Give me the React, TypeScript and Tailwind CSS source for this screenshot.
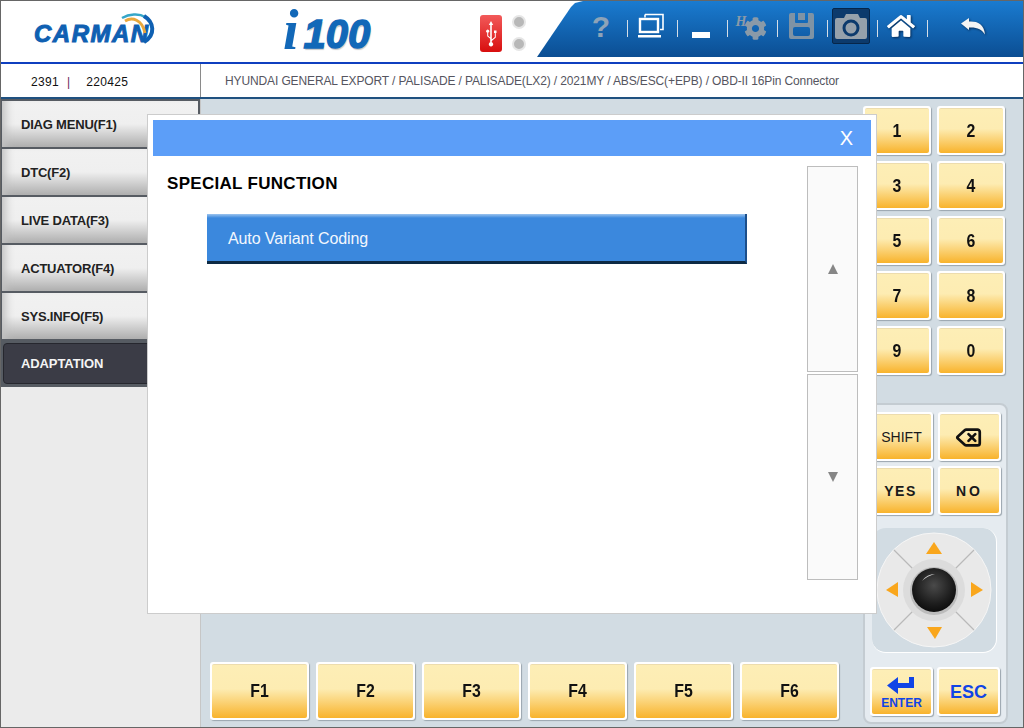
import { Delete } from "lucide-react";
import { FaCog, FaHome } from "react-icons/fa";

const font = "font-['Liberation_Sans',Arial,sans-serif]";

const sideMenu = ["DIAG MENU(F1)", "DTC(F2)", "LIVE DATA(F3)", "ACTUATOR(F4)", "SYS.INFO(F5)"];
const numbers = ["1", "2", "3", "4", "5", "6", "7", "8", "9", "0"];
const fKeys = ["F1", "F2", "F3", "F4", "F5", "F6"];

// white frame + yellow gradient, used by every hardware key
const YellowKey = ({ className, children }: { className: string; children: React.ReactNode }) => (
  <div className={`${className} rounded-[3px] bg-white p-[2px] shadow-[1px_1px_1px_#9aa5ad]`}>
    <div className="flex h-full w-full items-center justify-center rounded-[2px] border-t border-[#ecdcae] bg-[linear-gradient(#fdeeb6_0%,#fdecb2_45%,#f8b32c_100%)]">
      {children}
    </div>
  </div>
);

const KeyLabel = ({ text }: { text: string }) => (
  <span className="inline-block scale-x-[0.88] text-[18px] font-bold text-[#111]">{text}</span>
);

const Separator = () => <span className="mt-[5px] h-[17px] w-px bg-[#d5dee8]" />;

const ToolItem = ({ children }: { children: React.ReactNode }) => (
  <div className="flex h-[36px] w-[49px] items-center justify-center pr-[3px]">{children}</div>
);

const Toolbar = () => (
  <div className="relative -mb-[2px] ml-auto flex h-[56px] w-[486px] items-start bg-[linear-gradient(#1a7bd0,#0b4e93)] pl-[41px] pt-[7px] [clip-path:polygon(0_100%,0_56px,34px_6px,38px_2px,46px_0,100%_0,100%_100%)]">
    <div className="flex items-center">
      <ToolItem>
        <span className="text-[30px] font-bold text-[#8da3b8]">?</span>
      </ToolItem>
      <Separator />
      <ToolItem>
        <svg width="28" height="26" viewBox="0 0 28 26">
          <path d="M8 1.500h18v15h-3M8 1.500v3" fill="none" stroke="#fff" strokeWidth="1.6" />
          <rect x="3" y="6" width="18" height="13" fill="none" stroke="#fff" strokeWidth="2.4" />
          <rect x="1" y="22" width="23" height="2.500" fill="#fff" />
        </svg>
      </ToolItem>
      <Separator />
      <ToolItem>
        <span className="mt-[18px] h-[6px] w-[18px] bg-white" />
      </ToolItem>
      <Separator />
      <ToolItem>
        <div className="relative h-[27px] w-[31px]">
          <span className="absolute -top-[2px] left-0 font-['Liberation_Serif',serif] text-[14px] font-bold italic text-[#8a9aa8]">
            H
          </span>
          <FaCog className="absolute bottom-0 right-0 text-[23px] text-[#8a9aa8]" />
        </div>
      </ToolItem>
      <Separator />
      <ToolItem>
        <svg width="25" height="26" viewBox="0 0 25 26">
          <path
            fillRule="evenodd"
            fill="#7f93a5"
            d="M2 0h21a2 2 0 0 1 2 2v22a2 2 0 0 1-2 2H2a2 2 0 0 1-2-2V2a2 2 0 0 1 2-2zM6 0v9a1 1 0 0 0 1 1h11a1 1 0 0 0 1-1V0h-3v7h-7V0zM6 14a2 2 0 0 0-2 2v5a2 2 0 0 0 2 2h13a2 2 0 0 0 2-2v-5a2 2 0 0 0-2-2z"
          />
        </svg>
      </ToolItem>
      <Separator />
      <ToolItem>
        <div className="flex h-[36px] w-[38px] shrink-0 items-center justify-center rounded-[2px] border border-[#06264a] bg-[#0c3a6c]">
          <svg width="32" height="26" viewBox="0 0 32 26">
            <path d="M2 5h7l2-4h12l2 4h5a2 2 0 0 1 2 2v17a2 2 0 0 1-2 2H2a2 2 0 0 1-2-2V7a2 2 0 0 1 2-2z" fill="#96a1ab" />
            <circle cx="16" cy="15" r="7" fill="none" stroke="#0c3a6c" strokeWidth="3" />
          </svg>
        </div>
      </ToolItem>
      <Separator />
      <ToolItem>
        <FaHome className="text-[28px] text-white drop-shadow-[1px_1px_1px_#062b55]" />
      </ToolItem>
      <Separator />
      <div className="flex h-[36px] w-[90px] items-center justify-center">
        <svg width="24" height="17" viewBox="0 0 24 17" className="drop-shadow-[1px_1px_1px_#062b55]">
          <path d="M0 5.500L8 0v3.500c8-.5 15 2 16 13-3-5-8-7.500-16-7V12z" fill="#f4f4f4" />
        </svg>
      </div>
    </div>
  </div>
);

const Header = () => (
  <div className="flex h-[63px] border-b-2 border-[#0f3fbf]">
    {/* carman logo */}
    <div className="relative ml-[33px] w-[124px]">
      <span className="absolute left-0 top-[19px] text-[24px] font-bold italic leading-[28px] tracking-[1.5px] text-[#0f60b2] [-webkit-text-stroke:1px_#0f60b2]">
        CARMAN
      </span>
      <svg width="50" height="34" viewBox="0 0 50 34" className="absolute left-[75px] top-[12px]">
        <path d="M13 5C20 1 30 0 36 4" fill="none" stroke="#35a6c8" strokeWidth="2.500" />
        <path d="M16 8C23 4 33 6 36 20" fill="none" stroke="#e9a83c" strokeWidth="3" />
        <path d="M35 3C45 9 47 22 35 29" fill="none" stroke="#0f60b2" strokeWidth="4" />
      </svg>
    </div>
    {/* i100 logo */}
    <div className="ml-[125px] flex w-[92px] items-end pb-[4px]">
      <span className="font-['Liberation_Serif',serif] text-[56px] font-bold italic leading-[56px] text-[#1268b8]">
        i
      </span>
      <span className="mb-[6px] ml-[5px] text-[40px] font-bold italic leading-[36px] text-[#1268b8] [-webkit-text-stroke:1.4px_#1268b8] [text-shadow:1px_2px_1px_#c8c8c8]">
        100
      </span>
    </div>
    {/* usb + leds */}
    <div className="ml-[105px] mt-[14px] flex h-[37px] w-[22px] items-center justify-center rounded-[3px] bg-[linear-gradient(#f25a5a,#d80e0e)]">
      <svg width="12" height="26" viewBox="0 0 12 26" fill="#fff">
        <path d="M6 0l2.200 4H6.800v14.500l3-2.600V12H9V9.500h2.500V12h-.7v4.400L6.800 20v1.200a2.200 2.200 0 1 1-1.600 0v-3.400l-3-2.600V11.600a1.500 1.500 0 1 1 1 0v3.200l2 1.800V4H3.800z" />
      </svg>
    </div>
    <div className="ml-[10px] mt-[14px] flex h-[36px] flex-col justify-between">
      <span className="h-[14px] w-[14px] rounded-full border-2 border-[#e6e6e6] bg-[#b8b8b8]" />
      <span className="h-[14px] w-[14px] rounded-full border-2 border-[#e6e6e6] bg-[#b8b8b8]" />
    </div>
    <Toolbar />
  </div>
);

const Joystick = () => (
  <div className="h-[125px] w-[125px] rounded-[14px] border-b border-r border-white bg-[#d2dce3]">
    <svg width="125" height="125" viewBox="0 0 125 125">
      <defs>
        <radialGradient id="knob" cx="50%" cy="40%" r="60%">
          <stop offset="0%" stopColor="#4a4a4a" />
          <stop offset="70%" stopColor="#1d1d1d" />
          <stop offset="100%" stopColor="#0d0d0d" />
        </radialGradient>
      </defs>
      <circle cx="62" cy="62" r="57" fill="#e9e9e9" stroke="#f6f6f6" />
      <path d="M22 22L102 102M102 22L22 102" stroke="#b9b9b9" strokeWidth="1.200" />
      <circle cx="62" cy="62" r="31" fill="#dcdcdc" />
      <circle cx="62" cy="63" r="24" fill="#9c9c9c" opacity="0.5" />
      <circle cx="62" cy="62" r="22" fill="url(#knob)" />
      <path d="M50 53q5-7 13-7q-8 2-13 7z" fill="#d8d8d8" />
      <path d="M62 14l8 12H54z" fill="#f9a61c" />
      <path d="M63 111l-8-12h15z" fill="#f9a61c" />
      <path d="M14 62l12-8v15z" fill="#f9a61c" />
      <path d="M111 62l-12-8v15z" fill="#f9a61c" />
    </svg>
  </div>
);

const ControlPanel = () => (
  <div className="mt-[28px] h-[321px] w-[145px] rounded-[8px] border-2 border-[#c4ccd2] bg-[#e5ebf0] pl-[5px] pt-[7px]">
    <div className="grid w-[131px] grid-cols-[63px_63px] gap-x-[5px] gap-y-[5px]">
      <YellowKey className="h-[49px]">
        <span className="text-[14px] text-[#1a1a1a]">SHIFT</span>
      </YellowKey>
      <YellowKey className="h-[49px]">
        <Delete size={27} strokeWidth={2.4} className="-ml-[2px] text-[#111]" />
      </YellowKey>
      <YellowKey className="h-[49px]">
        <span className="pr-[2px] text-[14px] font-bold tracking-[1.5px] text-[#1a1a1a]">YES</span>
      </YellowKey>
      <YellowKey className="h-[49px]">
        <span className="text-[14px] font-bold tracking-[3px] text-[#1a1a1a]">NO</span>
      </YellowKey>
    </div>
    <div className="ml-[2px] mt-[13px]">
      <Joystick />
    </div>
    <div className="mt-[14px] grid w-[131px] grid-cols-[63px_63px] gap-x-[4px]">
      <YellowKey className="h-[49px]">
        <div className="flex flex-col items-center pt-[2px]">
          <svg width="28" height="18" viewBox="0 0 28 18">
            <path d="M27 0v11H11v6L0 8.500 11 0v6h11V0z" fill="#1144e6" />
          </svg>
          <span className="mt-[2px] text-[12px] font-bold leading-[12px] text-[#1144e6]">ENTER</span>
        </div>
      </YellowKey>
      <YellowKey className="h-[49px]">
        <span className="text-[18px] font-bold text-[#1144e6]">ESC</span>
      </YellowKey>
    </div>
  </div>
);

const Modal = () => (
  <div className="absolute left-[146px] top-[113px] flex h-[500px] w-[730px] flex-col border border-[#cccccc] bg-white p-[5px]">
    <div className="flex h-[36px] items-center justify-end bg-[#5c9ef8] pr-[18px]">
      <span className="text-[20px] leading-none text-white">X</span>
    </div>
    <div className="flex flex-1">
      <div className="flex-1 pl-[14px] pt-[18px]">
        <h2 className="text-[17px] font-bold leading-[20px] tracking-[0.3px] text-black">SPECIAL FUNCTION</h2>
        <div className="ml-[40px] mt-[20px] flex h-[50px] w-[540px] items-center border-b-[3px] border-r-2 border-b-[#0d2a44] border-r-[#1d4f8a] bg-[linear-gradient(#9cc4ef_0,#3b88dd_4px)] pl-[21px] pt-[3px] text-[16px] tracking-[-0.1px] text-[#f2f7fd]">
          Auto Variant Coding
        </div>
      </div>
      <div className="mr-[13px] mt-[10px] flex w-[51px] flex-col gap-[2px]">
        <div className="flex h-[206px] items-center justify-center border border-[#bdbdbd] bg-[#fafafa]">
          <span className="h-0 w-0 border-x-[5.5px] border-b-[10px] border-x-transparent border-b-[#868686]" />
        </div>
        <div className="flex h-[206px] items-center justify-center border border-[#bdbdbd] bg-[#fafafa]">
          <span className="h-0 w-0 border-x-[5.5px] border-t-[10px] border-x-transparent border-t-[#868686]" />
        </div>
      </div>
    </div>
  </div>
);

export default function App() {
  return (
    <div className={`${font} relative flex h-[728px] w-[1024px] flex-col overflow-hidden border border-[#666666] bg-white`}>
      <Header />

      <div className="flex h-[35px] border-b-2 border-[#1f5180]">
        <div className="flex w-[200px] items-center border-r border-[#8a8a8a] pl-[30px] pt-[2px] text-[12px] tracking-[0.3px] text-[#111]">
          2391
          <span className="ml-[8px] text-[#6a1b5a]">|</span>
          <span className="ml-[16px]">220425</span>
        </div>
        <div className="flex items-center pl-[24px] text-[12px] tracking-[-0.12px] text-[#555560]">
          HYUNDAI GENERAL EXPORT / PALISADE / PALISADE(LX2) / 2021MY / ABS/ESC(+EPB) / OBD-II 16Pin Connector
        </div>
      </div>

      <div className="flex flex-1">
        <div className="w-[200px] border-r border-[#c6c6c6] bg-[#ebebeb]">
          <div className="flex flex-col bg-[#565b62] pl-[1px] pr-[2px] pt-[2px]">
            {sideMenu.map((label) => (
              <div
                key={label}
                className="mb-[2px] flex h-[46px] items-center bg-[linear-gradient(#f1f1f1_0%,#efefef_50%,#aeaeae_100%)] pl-[19px] pt-[2px] text-[13px] font-bold tracking-[-0.2px] text-[#222] shadow-[inset_10px_0_8px_-6px_#c2c2c2]"
              >
                {label}
              </div>
            ))}
            <div className="mb-[3px] ml-[1px] mt-[2px] flex h-[41px] items-center rounded-[4px] border border-[#26272e] bg-[#3b3c46] pl-[17px] text-[13px] font-bold tracking-[-0.1px] text-[#f4f4f4]">
              ADAPTATION
            </div>
          </div>
        </div>

        <div className="flex flex-1 flex-col justify-end bg-[#d2dce3] pb-[7px] pl-[9px]">
          <div className="flex gap-[7px]">
            {fKeys.map((key) => (
              <YellowKey key={key} className="h-[58px] w-[99px]">
                <KeyLabel text={key} />
              </YellowKey>
            ))}
          </div>
        </div>

        <div className="w-[160px] bg-[#d2dce3] pt-[7px]">
          <div className="grid w-[142px] grid-cols-[68px_68px] gap-[6px]">
            {numbers.map((n) => (
              <YellowKey key={n} className="h-[49px]">
                <KeyLabel text={n} />
              </YellowKey>
            ))}
          </div>
          <ControlPanel />
        </div>
      </div>

      <Modal />
    </div>
  );
}
